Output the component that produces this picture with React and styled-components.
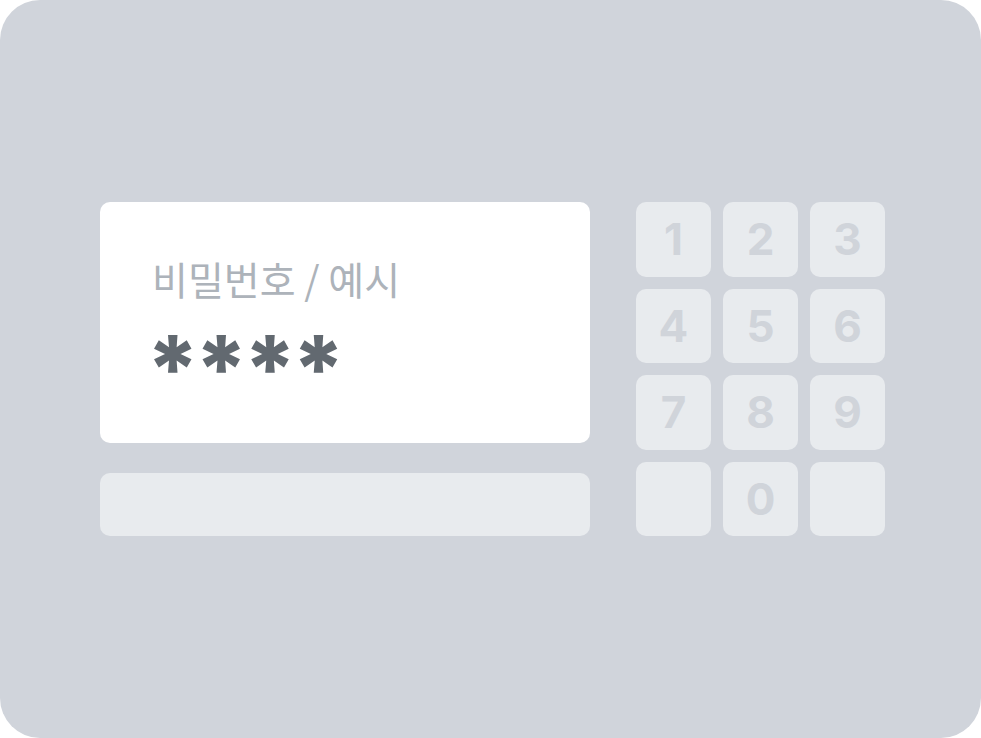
import React from "react";
import styled, { createGlobalStyle } from "styled-components";

const GlobalStyle = createGlobalStyle`
  html, body {
    margin: 0;
    padding: 0;
    background: #ffffff;
  }
  body {
    font-family: Inter, "Noto Sans CJK KR", sans-serif;
  }
`;

const Frame = styled.div`
  width: 981px;
  height: 738px;
  box-sizing: border-box;
  padding-left: 4px;
  background: #d0d4db;
  border-radius: 40px;
  display: flex;
  align-items: center;
  justify-content: center;
  gap: 46px;
`;

const LeftColumn = styled.div`
  display: flex;
  flex-direction: column;
  gap: 30px;
  width: 490px;
`;

const Display = styled.div`
  height: 241px;
  box-sizing: border-box;
  background: #ffffff;
  border-radius: 10px;
  padding: 48px 0 0 52px;
  display: flex;
  flex-direction: column;
`;

const Label = styled.div`
  font-family: "Noto Sans CJK KR", sans-serif;
  font-size: 39px;
  font-weight: 400;
  color: #adb3ba;
  line-height: 56px;
`;

const Masked = styled.div`
  font-family: Inter, sans-serif;
  font-size: 92px;
  font-weight: 800;
  color: #626970;
  line-height: 94px;
  letter-spacing: -5px;
  margin: 16px 0 0 -6px;
`;

const Bar = styled.div`
  height: 63px;
  background: #e8ebee;
  border-radius: 10px;
`;

const Keypad = styled.div`
  display: grid;
  grid-template-columns: repeat(3, 75px);
  grid-auto-rows: 74.5px;
  gap: 12px;
`;

const Key = styled.div`
  background: #e8ebee;
  border-radius: 10px;
  display: flex;
  align-items: center;
  justify-content: center;
  font-family: Inter, sans-serif;
  font-size: 44px;
  font-weight: 700;
  color: #d0d4da;
`;

const keys = ["1", "2", "3", "4", "5", "6", "7", "8", "9", "", "0", ""];

export default function App() {
  return (
    <>
      <GlobalStyle />
      <Frame>
        <LeftColumn>
          <Display>
            <Label>비밀번호 / 예시</Label>
            <Masked>****</Masked>
          </Display>
          <Bar />
        </LeftColumn>
        <Keypad>
          {keys.map((k, i) => (
            <Key key={i}>{k}</Key>
          ))}
        </Keypad>
      </Frame>
    </>
  );
}
